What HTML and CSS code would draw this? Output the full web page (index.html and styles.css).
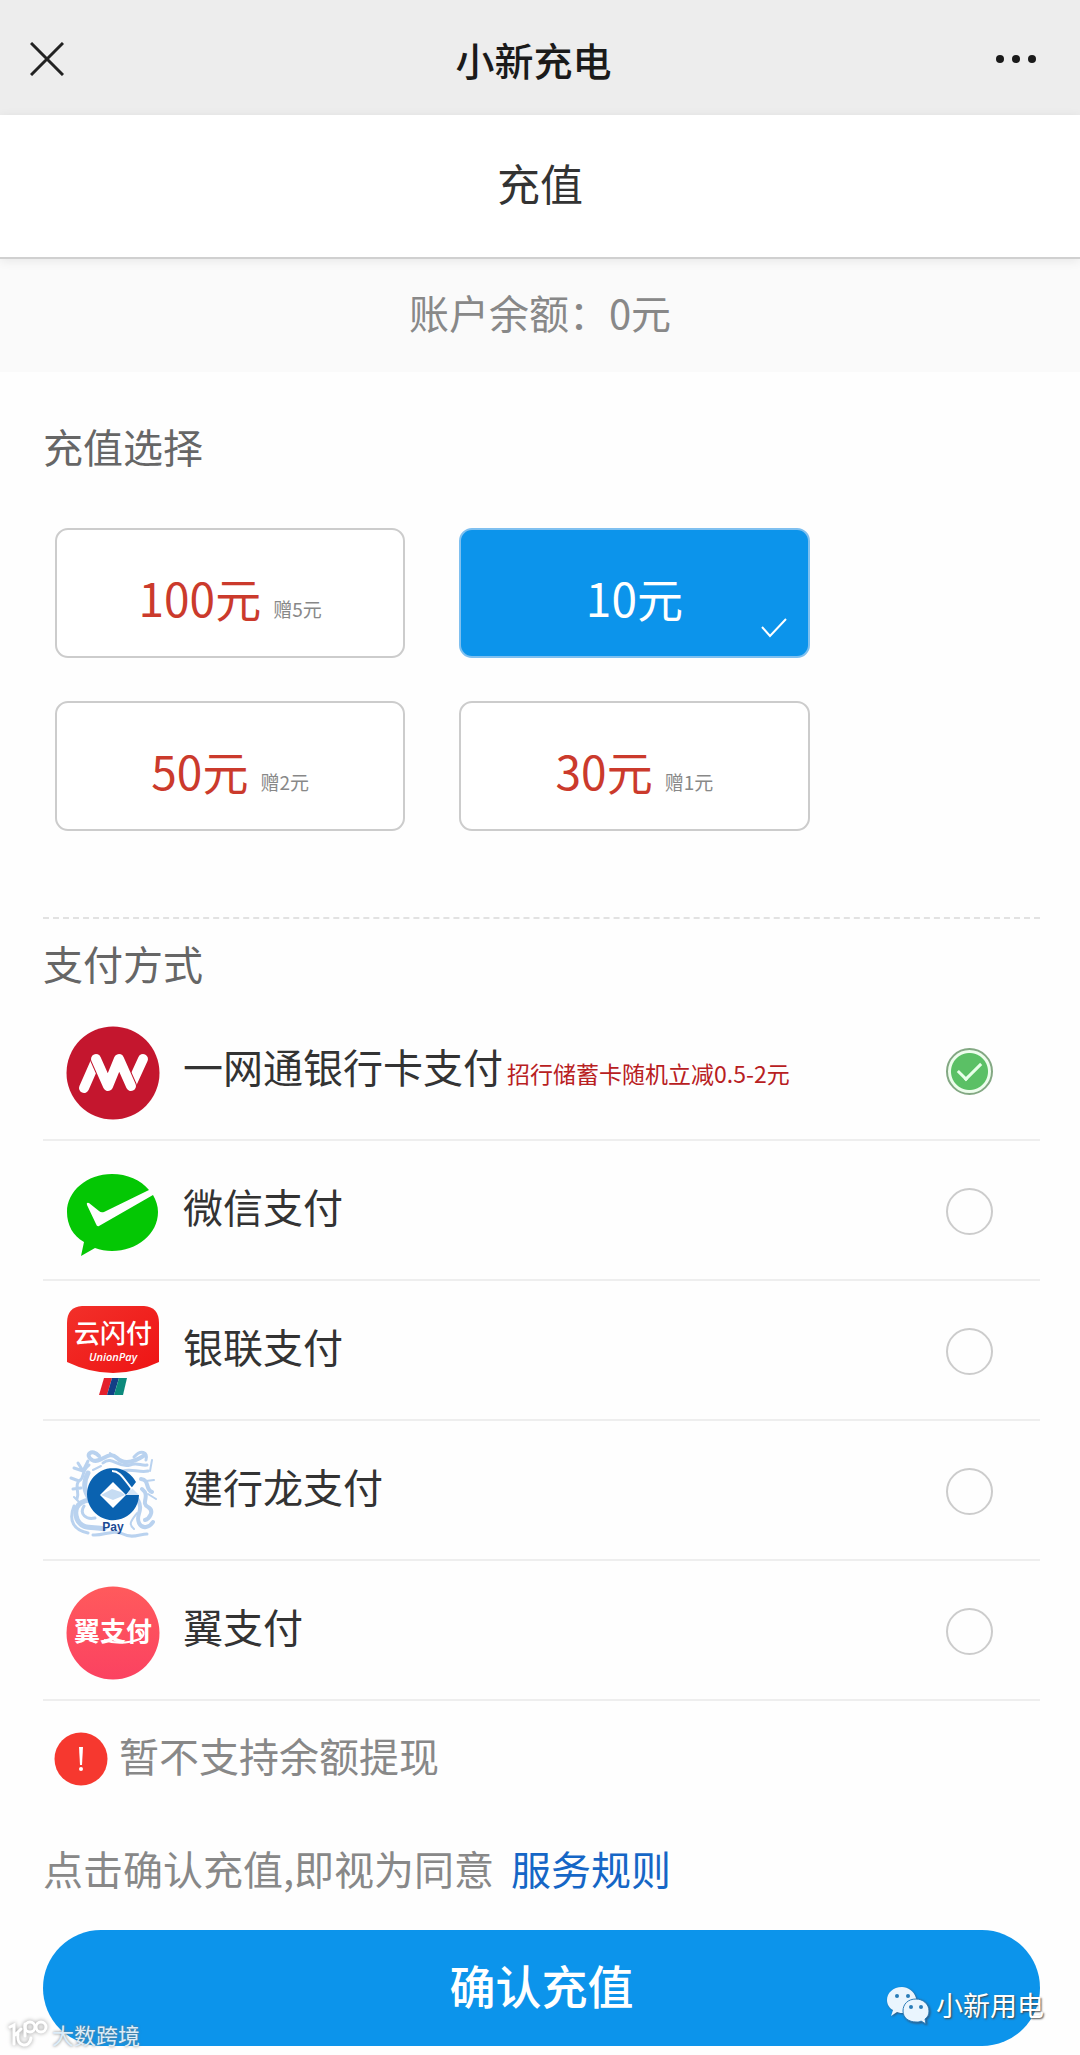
FILE: index.html
```html
<!DOCTYPE html>
<html lang="zh-CN">
  <head>
    <meta charset="UTF-8" />
    <meta name="viewport" content="width=device-width, initial-scale=1.0" />
    <title>小新充电</title>
    <link rel="stylesheet" href="styles.css">
  </head>
  <body>
    <header class="topbar">
      <button class="icon-btn" type="button" aria-label="关闭">
        <svg width="34" height="34" viewBox="0 0 34 34"><path d="M1 1L33 33M33 1L1 33" stroke="#222" stroke-width="3" /></svg>
      </button>
      <h1>小新充电</h1>
      <button class="icon-btn more" type="button" aria-label="更多">
        <svg width="42" height="10" viewBox="0 0 42 10" fill="#1a1a1a"><circle cx="5" cy="5" r="4" /><circle cx="21" cy="5" r="4" /><circle cx="37" cy="5" r="4" /></svg>
      </button>
    </header>

    <h2 class="page-title">充值</h2>
    <p class="balance">账户余额：0元</p>

    <main>
      <section class="amounts">
        <h3>充值选择</h3>
        <div class="amount-grid">
          <button class="amount" type="button">100元<small>赠5元</small></button>
          <button class="amount selected" type="button">10元
            <svg class="tick" width="26" height="20" viewBox="0 0 26 20"><path d="M1 9L9 18L25 1" fill="none" stroke="#fff" stroke-width="2" /></svg>
          </button>
          <button class="amount" type="button">50元<small>赠2元</small></button>
          <button class="amount" type="button">30元<small>赠1元</small></button>
        </div>
      </section>

      <section class="methods">
        <h3>支付方式</h3>

        <label class="method">
          <svg class="logo" viewBox="0 0 94 94">
            <circle cx="47" cy="47" r="46.5" fill="#c4162e" />
            <g fill="none" stroke-linecap="round" stroke-linejoin="round">
              <path d="M18 62L29 37M66 57L77 33" stroke="#fff" stroke-width="10" />
              <path d="M30 33L42 60L53 33L65 60" stroke="#c4162e" stroke-width="12" />
              <path d="M30 33L42 60L53 33L65 60" stroke="#fff" stroke-width="10" />
            </g>
          </svg>
          <span class="name">一网通银行卡支付<small>招行储蓄卡随机立减0.5-2元</small></span>
          <input type="radio" name="pay" checked />
        </label>

        <label class="method">
          <svg class="logo" viewBox="0 0 94 94">
            <path d="M46 8C21 8 1 25 1 46C1 59 7 70 18 76L15 90L29 82C34 84 40 85 46 85C71 85 92 68 92 46C92 40 90 34 87 29L33 60Q31 61 30 58L21 39Q20 36 23 37L33 45Q35 47 38 46L83 24C75 14 61 8 46 8Z" fill="#04c704" />
          </svg>
          <span class="name">微信支付</span>
          <input type="radio" name="pay" />
        </label>

        <label class="method">
          <svg class="logo" viewBox="0 0 94 94">
            <defs>
              <linearGradient id="union" x1="0" y1="0" x2="1" y2="1"><stop offset="0" stop-color="#f2302a" /><stop offset="1" stop-color="#ee1414" /></linearGradient>
            </defs>
            <path d="M16 0H78Q93 1 93 17V56Q70 67 47 67Q24 67 1 56V17Q1 1 16 0Z" fill="url(#union)" />
            <text class="logo-cn" x="47" y="37" font-size="26">云闪付</text>
            <text class="logo-en" x="47" y="55" font-size="11">UnionPay</text>
            <path d="M38 72H46L41 89H33Z" fill="#e3202c" />
            <path d="M46 72H53L48 89H41Z" fill="#123f86" />
            <path d="M53 72H61L57 89H48Z" fill="#0c8a7c" />
          </svg>
          <span class="name">银联支付</span>
          <input type="radio" name="pay" />
        </label>

        <label class="method">
          <svg class="logo" viewBox="0 0 94 94">
            <!-- dragon -->
            <g fill="none" stroke="#b9d2ef" stroke-linecap="round" stroke-linejoin="round">
              <path d="M33 10C26 2 18 9 26 14C35 19 42 3 51 12C59 20 70 15 79 9" stroke-width="4" />
              <path d="M37 17C46 9 53 23 64 19C71 16 75 20 81 19M57 25C65 22 73 27 82 25M68 11C75 3 82 6 80 14" stroke-width="3" />
              <path d="M23 19C14 26 20 31 13 35C8 40 14 45 11 53M12 17L17 25L8 22M17 25L22 15M13 35L5 32M15 42L7 43" stroke-width="3" />
              <path d="M22 27C16 39 19 46 24 54M23 54C10 56 8 65 11 73C16 85 29 80 38 83" stroke-width="5" />
              <path d="M18 60C13 68 20 74 29 72M8 60C2 75 8 84 22 87M27 89C38 90 47 83 57 88C66 93 74 88 81 88" stroke-width="3" />
              <path d="M75 33C84 34 79 44 86 46M76 43C85 50 74 57 82 61C89 65 83 73 79 74M72 54C78 65 69 69 73 77C76 84 84 81 87 76" stroke-width="4" />
              <path d="M80 35L88 34M82 48L90 53M71 67C65 75 62 78 68 83M8 51L14 57M84 25L86 14M44 7L51 13M27 24L35 20" stroke-width="2" />
            </g>
            <!-- ring, open on the right, with a square hole -->
            <path d="M70 36L60 49H73A26 26 0 1 1 70 36Z" fill="#0a62b0" />
            <path d="M47 36L60 49L47 62L34 49Z" fill="#fff" />
            <path d="M35 49L46 43L55 46L59 49L47 54Z" fill="#c6dcf3" />
            <path d="M60 49L66 42L73 49Z" fill="#d4e5f7" />
            <path d="M46 25C54 25 57 32 66 43" fill="none" stroke="#fff" stroke-width="2" />
            <text class="logo-pay" x="47" y="85" font-size="12">Pay</text>
          </svg>
          <span class="name">建行龙支付</span>
          <input type="radio" name="pay" />
        </label>

        <label class="method">
          <svg class="logo" viewBox="0 0 94 94">
            <defs>
              <linearGradient id="best" x1="0" y1="0" x2="0" y2="1"><stop offset="0" stop-color="#ff5a5c" /><stop offset="1" stop-color="#fb4261" /></linearGradient>
            </defs>
            <circle cx="47" cy="47" r="46.5" fill="url(#best)" />
            <text class="logo-cn bold" x="47" y="55" font-size="26">翼支付</text>
            <path d="M38 54Q55 60 74 53Q80 48 76 44Q71 42 70 47" fill="none" stroke="#fff" stroke-width="2" />
          </svg>
          <span class="name">翼支付</span>
          <input type="radio" name="pay" />
        </label>
      </section>

      <p class="notice">
        <svg width="54" height="54" viewBox="0 0 54 54"><circle cx="27" cy="27" r="26.5" fill="#f6382f" /><path d="M25 15H29L28 33H26Z" fill="#fff" /><circle cx="27" cy="37" r="2" fill="#fff" /></svg>
        暂不支持余额提现
      </p>
      <p class="agree">点击确认充值,即视为同意 <a href="#">服务规则</a></p>
      <button class="confirm" type="button">确认充值</button>

      <div class="mark mark-left">
        <svg width="40" height="28" viewBox="0 0 40 28" fill="none" stroke="#fff" stroke-width="3" stroke-linecap="round">
          <path d="M2 7L6 5V24M6 16L13 9M10 14C8 28 22 28 23 18M17 4V16" /><circle cx="22" cy="7" r="5" /><circle cx="33" cy="7" r="5" />
        </svg>
        大数跨境
      </div>
      <div class="mark mark-right">
        <svg width="44" height="38" viewBox="0 0 44 38">
          <path d="M16 1C7 1 1 7 1 14C1 18 3 22 7 24L5 30L11 26C13 27 16 27 18 27C29 27 32 20 30 12C28 5 22 1 16 1Z" fill="#eaf5fe" />
          <path d="M30 13C22 13 17 18 17 25C17 32 23 36 30 36C32 36 34 36 35 35L40 38L39 33C42 31 43 28 43 25C43 18 37 13 30 13Z" fill="#eaf5fe" stroke="#2b7cb8" stroke-width="1" />
          <g fill="#2b7cb8"><circle cx="11" cy="10" r="2" /><circle cx="22" cy="10" r="2" /><circle cx="25" cy="21" r="2" /><circle cx="35" cy="21" r="2" /></g>
        </svg>
        小新用电
      </div>
    </main>
  </body>
</html>
```
FILE: styles.css
```css
* {
  box-sizing: border-box;
}

body {
  margin: 0;
  background-color: #fefefe;
  color: #333;
  font-family: "Noto Sans CJK SC", sans-serif;
  font-size: 40px;
  line-height: 60px;
}

h1, h2, h3, p {
  margin: 0;
  font-weight: 400;
}

button {
  font-family: inherit;
  cursor: pointer;
}

.topbar {
  display: flex;
  align-items: center;
  justify-content: space-between;
  height: 115px;
  padding: 2px 43px 0 30px;
  background-color: #ededed;
}

.topbar h1 {
  color: #1a1a1a;
  font-size: 39px;
  font-weight: 500;
}

.icon-btn {
  display: flex;
  width: 48px;
  padding: 0;
  border: none;
  background: none;
}

.more {
  justify-content: flex-end;
}

.page-title {
  position: relative;
  height: 144px;
  padding-top: 37px;
  border-bottom: 2px solid #d0d0d0;
  background-color: #fff;
  box-shadow: 0 2px 10px rgba(0, 0, 0, 0.08);
  font-size: 43px;
  text-align: center;
}

.balance {
  height: 113px;
  padding-top: 23px;
  background-color: #fafafa;
  color: #888;
  text-align: center;
}

main {
  position: relative;
  padding: 44px 40px 9px 43px;
}

h3 {
  color: #666;
  font-size: 40px;
}

.amounts {
  padding-bottom: 86px;
  border-bottom: 2px dashed #e2e2e2;
}

.amount-grid {
  display: grid;
  grid-template-columns: 36% 36%;
  gap: 43px 54px;
  padding: 52px 12px 0;
}

.amount {
  position: relative;
  height: 130px;
  padding: 8px 0 0;
  border: 2px solid #ccc;
  border-radius: 13px;
  background-color: #fff;
  color: #cb3a2c;
  font-size: 46px;
}

.amount small {
  margin-left: 12px;
  color: #888;
  font-size: 19px;
}

.amount.selected {
  border-color: #7fc0f0;
  background-color: #0c94eb;
  color: #fff;
}

.tick {
  position: absolute;
  right: 21px;
  bottom: 18px;
}

.methods {
  padding-top: 14px;
}

.methods h3 {
  margin-bottom: 8px;
}

.method {
  display: flex;
  align-items: center;
  height: 140px;
  padding: 6px 47px 0 23px;
  border-bottom: 2px solid #eee;
}

.logo {
  width: 94px;
  height: 94px;
  margin-right: 23px;
}

.name {
  flex: 1;
  padding-bottom: 14px;
}

.name small {
  margin-left: 4px;
  color: #b8201f;
  font-size: 23px;
  line-height: 30px;
}

.logo-cn {
  fill: #fff;
  font-weight: 500;
  text-anchor: middle;
}

.bold {
  font-weight: 700;
}

.logo-en {
  fill: #fff;
  font-family: "Open Sans", sans-serif;
  font-style: italic;
  font-weight: 600;
  text-anchor: middle;
}

.logo-pay {
  fill: #1a4a94;
  font-family: "Liberation Sans", sans-serif;
  font-weight: 700;
  text-anchor: middle;
}

.method input {
  display: grid;
  place-items: center;
  appearance: none;
  width: 47px;
  height: 47px;
  margin: 0 0 4px;
  border: 2px solid #ccc;
  border-radius: 50%;
}

.method input:checked {
  border-color: #83a883;
  background: radial-gradient(circle, #5bc065 18px, #edfdec 19px);
}

.method input:checked::before {
  content: "";
  width: 20px;
  height: 10px;
  margin-bottom: 6px;
  border: solid #e8ffe8;
  border-width: 0 0 3px 3px;
  transform: rotate(-45deg);
}

.notice {
  display: flex;
  align-items: center;
  gap: 11px;
  margin-top: 23px;
  padding-left: 11px;
  color: #888;
}

.notice svg {
  margin-top: 8px;
}

.agree {
  margin-top: 52px;
  color: #888;
}

.agree a {
  margin-left: 8px;
  color: #1566c6;
  text-decoration: none;
}

.confirm {
  display: block;
  width: 100%;
  height: 116px;
  margin-top: 32px;
  padding: 0 0 8px;
  border: none;
  border-radius: 58px;
  background-color: #0c94eb;
  color: #fff;
  font-size: 46px;
  font-weight: 500;
}

/* marks over the bottom corners */
.mark {
  position: absolute;
  display: flex;
  align-items: center;
  color: #fff;
  text-shadow: 1px 1px 2px #444;
}

.mark-left {
  left: 8px;
  bottom: 5px;
  gap: 4px;
  color: #dcecf8;
  font-size: 22px;
  line-height: 32px;
  text-shadow: 0 0 3px #777;
}

.mark-left svg {
  filter: drop-shadow(0 0 2px #999);
}

.mark-right {
  right: 36px;
  bottom: 30px;
  gap: 6px;
  font-size: 27px;
  line-height: 40px;
}

.mark-right svg {
  filter: drop-shadow(1px 1px 1px #357);
}
```
